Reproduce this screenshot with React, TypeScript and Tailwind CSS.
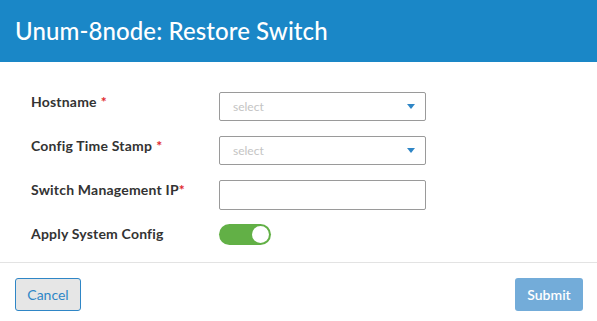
import { useState } from 'react';

const font = { fontFamily: 'Lato, "Noto Sans", sans-serif' };

function Label({ text, star, tight }: { text: string; star?: boolean; tight?: boolean }) {
  return (
    <div className="w-[188px] shrink-0 text-[14px] font-bold tracking-[0.2px] text-[#333333]">
      {text}
      {star && <span className={`text-[#e0262c] ${tight ? '' : 'ml-1'}`}>*</span>}
    </div>
  );
}

function SelectBox() {
  return (
    <div className="flex h-[29px] w-[207px] items-center justify-between rounded-[2px] border border-[#9a9a9a] bg-white pl-[13px] pr-[10px]">
      <span className="text-[12px] text-[#c4c4c4]">select</span>
      <svg width="8" height="5" viewBox="0 0 8 5">
        <path d="M0 0h8L4 5z" fill="#2f86c6" />
      </svg>
    </div>
  );
}

export default function App() {
  const [apply, setApply] = useState(true);

  return (
    <div className="h-[321px] w-[597px] bg-white" style={font}>
      <div className="flex h-[62px] items-center bg-[#1a87c7] px-[15px]">
        <h1 className="text-[24px] font-medium tracking-[0.1px] text-white">Unum-8node: Restore Switch</h1>
      </div>

      <div className="flex flex-col gap-[15px] px-[31px] pb-[17px] pt-[30px]">
        <div className="flex items-start">
          <div className="-mt-[1px]">
            <Label text="Hostname" star />
          </div>
          <SelectBox />
        </div>
        <div className="flex items-start">
          <div className="-mt-[1px]">
            <Label text="Config Time Stamp" star />
          </div>
          <SelectBox />
        </div>
        <div className="flex items-start">
          <div className="-mt-[1px]">
            <Label text="Switch Management IP" star tight />
          </div>
          <input className="h-[30px] w-[207px] rounded-[2px] border border-[#9a9a9a] bg-white px-2 text-[12px] outline-none" />
        </div>
        <div className="-mt-[1px] flex items-start">
          <div className="-mt-[1px]">
            <Label text="Apply System Config" />
          </div>
          <button
            onClick={() => setApply(!apply)}
            className={`flex h-[21px] w-[52px] items-center rounded-full p-[2px] ${apply ? 'justify-end bg-[#62b046]' : 'justify-start bg-[#cccccc]'}`}
          >
            <span className="h-[17px] w-[17px] rounded-full bg-white" />
          </button>
        </div>
      </div>

      <div className="flex items-center justify-between border-t border-[#e3e3e3] px-[15px] pt-[15px]">
        <button className="h-[33px] w-[66px] rounded-[3px] border border-[#2f86c6] bg-[#e6e6e6] text-[14px] text-[#2f86c6]">
          Cancel
        </button>
        <button className="mr-[-1px] h-[33px] w-[68px] rounded-[3px] bg-[#73acd9] text-[14px] font-semibold text-white">
          Submit
        </button>
      </div>
    </div>
  );
}
